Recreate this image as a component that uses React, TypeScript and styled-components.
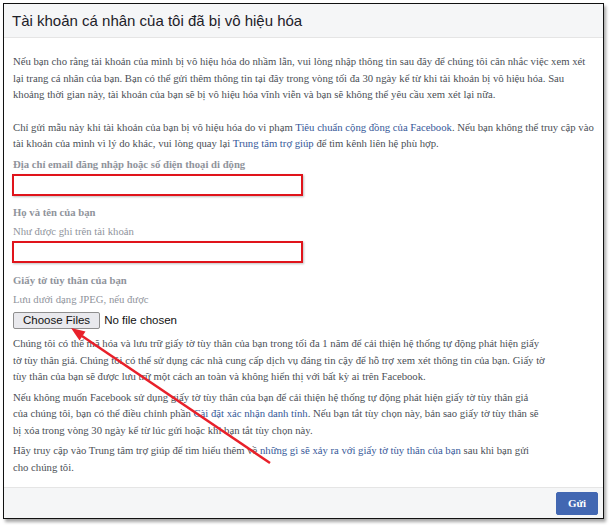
import styled, { createGlobalStyle } from "styled-components";

const Global = createGlobalStyle`
  html, body {
    margin: 0;
    padding: 0;
    background: #ffffff;
  }
`;

const Page = styled.div`
  position: relative;
  width: 609px;
  height: 525px;
  padding: 3px 0 0 3px;
  box-sizing: border-box;
`;

const Frame = styled.div`
  width: 601px;
  height: 516px;
  box-sizing: border-box;
  border: 1.5px solid #111;
  box-shadow: 2px 3px 3px rgba(0, 0, 0, 0.35);
  display: flex;
  flex-direction: column;
  background: #fff;
`;

const Header = styled.div`
  height: 33px;
  flex: none;
  background: #f5f6f7;
  border-bottom: 1px solid #e5e5e5;
  display: flex;
  align-items: center;
  padding: 0 8px;
  font-family: "Liberation Sans", Arial, sans-serif;
  font-size: 15px;
  color: #1d2129;
`;

const Body = styled.div`
  flex: 1;
  padding: 15px 4px 0 9px;
  font-family: "Liberation Serif", "Times New Roman", serif;
  font-size: 10.7px;
  line-height: 16.5px;
  color: #4b4f56;
`;

const Para = styled.p<{ $gap?: number; $top?: number }>`
  margin: ${(p) => p.$top ?? 0}px 0 ${(p) => p.$gap ?? 0}px 0;
  white-space: nowrap;
`;

const Link = styled.span`
  color: #365899;
`;

const Label = styled.div<{ $top: number }>`
  margin-top: ${(p) => p.$top}px;
  font-weight: bold;
  color: #90949c;
`;

const Hint = styled.div`
  margin-top: 2px;
  color: #90949c;
`;

const Field = styled.div<{ $top: number }>`
  margin-top: ${(p) => p.$top}px;
  margin-left: -1px;
  width: 291px;
  height: 22px;
  box-sizing: border-box;
  border: 2px solid #e0141b;
  box-shadow: 1px 1px 2px rgba(0, 0, 0, 0.25);
  background: #fff;
`;

const FileRow = styled.div`
  margin-top: 5px;
  display: flex;
  align-items: center;
  gap: 4px;
  font-family: "Liberation Sans", Arial, sans-serif;
  font-size: 11.5px;
  color: #111;
`;

const FileButton = styled.div`
  height: 17px;
  padding: 0 9px;
  box-sizing: border-box;
  display: flex;
  align-items: center;
  border: 1px solid #8f8f8f;
  border-radius: 2px;
  background: #e9e9ed;
`;

const Footer = styled.div`
  height: 30px;
  flex: none;
  background: #f5f6f7;
  border-top: 1px solid #e5e5e5;
  display: flex;
  align-items: center;
  justify-content: flex-end;
  padding: 0 5px;
`;

const Submit = styled.div`
  width: 40px;
  height: 21px;
  background: #4267b2;
  border: 1px solid #4267b2;
  border-radius: 2px;
  color: #fff;
  font-family: "Liberation Serif", "Times New Roman", serif;
  font-weight: bold;
  font-size: 11px;
  display: flex;
  align-items: center;
  justify-content: center;
`;

const Arrow = styled.svg`
  position: absolute;
  left: 0;
  top: 0;
  pointer-events: none;
`;

export default function App() {
  return (
    <>
      <Global />
      <Page>
        <Frame>
          <Header>Tài khoản cá nhân của tôi đã bị vô hiệu hóa</Header>
          <Body>
            <Para $gap={16}>
              Nếu bạn cho rằng tài khoản của mình bị vô hiệu hóa do nhầm lẫn, vui lòng nhập thông tin sau đây để
              chúng tôi cân nhắc việc xem xét
              <br />
              lại trang cá nhân của bạn. Bạn có thể gửi thêm thông tin tại đây trong vòng tối đa 30 ngày kể từ khi
              tài khoản bị vô hiệu hóa. Sau
              <br />
              khoảng thời gian này, tài khoản của bạn sẽ bị vô hiệu hóa vĩnh viễn và bạn sẽ không thể yêu cầu xem
              xét lại nữa.
            </Para>
            <Para>
              Chỉ gửi mẫu này khi tài khoản của bạn bị vô hiệu hóa do vi phạm{" "}
              <Link>Tiêu chuẩn cộng đồng của Facebook</Link>. Nếu bạn không thể truy cập vào
              <br />
              tài khoản của mình vì lý do khác, vui lòng quay lại <Link>Trung tâm trợ giúp</Link> để tìm kênh liên hệ
              phù hợp.
            </Para>
            <Label $top={4}>Địa chỉ email đăng nhập hoặc số điện thoại di động</Label>
            <Field $top={2} />
            <Label $top={8}>Họ và tên của bạn</Label>
            <Hint>Như được ghi trên tài khoản</Hint>
            <Field $top={2} />
            <Label $top={9}>Giấy tờ tùy thân của bạn</Label>
            <Hint>Lưu dưới dạng JPEG, nếu được</Hint>
            <FileRow>
              <FileButton>Choose Files</FileButton>
              <span>No file chosen</span>
            </FileRow>
            <Para $top={6} $gap={4}>
              Chúng tôi có thể mã hóa và lưu trữ giấy tờ tùy thân của bạn trong tối đa 1 năm để cải thiện hệ thống
              tự động phát hiện giấy
              <br />
              tờ tùy thân giả. Chúng tôi có thể sử dụng các nhà cung cấp dịch vụ đáng tin cậy để hỗ trợ xem xét
              thông tin của bạn. Giấy tờ
              <br />
              tùy thân của bạn sẽ được lưu trữ một cách an toàn và không hiển thị với bất kỳ ai trên Facebook.
            </Para>
            <Para $gap={4}>
              Nếu không muốn Facebook sử dụng giấy tờ tùy thân của bạn để cải thiện hệ thống tự động phát hiện giấy
              tờ tùy thân giả
              <br />
              của chúng tôi, bạn có thể điều chỉnh phần <Link>Cài đặt xác nhận danh tính</Link>. Nếu bạn tắt tùy
              chọn này, bản sao giấy tờ tùy thân sẽ
              <br />
              bị xóa trong vòng 30 ngày kể từ lúc gửi hoặc khi bạn tắt tùy chọn này.
            </Para>
            <Para>
              Hãy truy cập vào Trung tâm trợ giúp để tìm hiểu thêm về{" "}
              <Link>những gì sẽ xảy ra với giấy tờ tùy thân của bạn</Link> sau khi bạn gửi
              <br />
              cho chúng tôi.
            </Para>
          </Body>
          <Footer>
            <Submit>Gửi</Submit>
          </Footer>
        </Frame>
        <Arrow width="609" height="525" viewBox="0 0 609 525">
          <line x1="270" y1="463" x2="82" y2="336" stroke="#e8202a" strokeWidth="2.5" />
          <polygon points="71,328 79.5,340.5 85.5,331.5" fill="#e8202a" />
        </Arrow>
      </Page>
    </>
  );
}
